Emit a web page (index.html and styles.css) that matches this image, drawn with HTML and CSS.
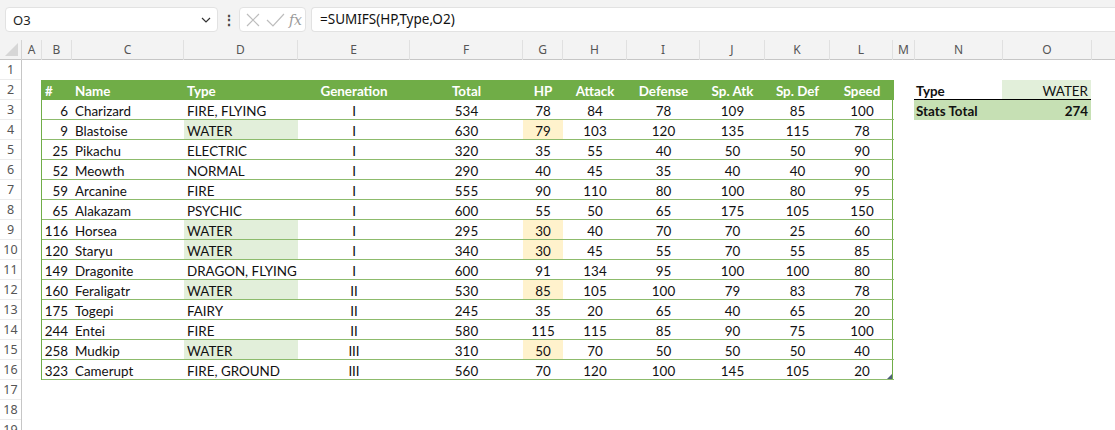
FILE: index.html
```html
<!DOCTYPE html>
<html>
<head>
<meta charset="utf-8">
<link rel="stylesheet" href="styles.css">
</head>
<body>
<div class="app">
  <div class="toolbar">
    <div class="namebox">
      <span class="ref">O3</span>
      <svg class="chev" width="10" height="6" viewBox="0 0 10 6"><path d="M1 1 L5 5 L9 1" fill="none" stroke="#333" stroke-width="1.2"/></svg>
    </div>
    <div class="dots">⋮</div>
    <div class="fxbox">
      <svg width="18" height="18" viewBox="0 0 18 18"><path d="M3 3 L15 15 M15 3 L3 15" stroke="#bdbdbd" stroke-width="1.2" fill="none"/></svg>
      <svg width="20" height="18" viewBox="0 0 20 18"><path d="M2 9 L8 15 L19 3" stroke="#bdbdbd" stroke-width="1.2" fill="none"/></svg>
      <span class="fx">fx</span>
    </div>
    <div class="formula">=SUMIFS(HP,Type,O2)</div>
  </div>

  <div class="colhdr">
    <div class="corner"><span class="tri"></span></div>
    <div class="ch">A</div><div class="ch">B</div><div class="ch">C</div><div class="ch">D</div>
    <div class="ch">E</div><div class="ch">F</div><div class="ch">G</div><div class="ch">H</div>
    <div class="ch">I</div><div class="ch">J</div><div class="ch">K</div><div class="ch">L</div>
    <div class="ch">M</div><div class="ch">N</div><div class="ch">O</div><div class="ch last"></div>
  </div>

  <div class="sheet">
    <div class="rowhdrs">
      <div class="rh">1</div><div class="rh">2</div><div class="rh">3</div><div class="rh">4</div>
      <div class="rh">5</div><div class="rh">6</div><div class="rh">7</div><div class="rh">8</div>
      <div class="rh">9</div><div class="rh">10</div><div class="rh">11</div><div class="rh">12</div>
      <div class="rh">13</div><div class="rh">14</div><div class="rh">15</div><div class="rh">16</div>
      <div class="rh">17</div><div class="rh">18</div><div class="rh">19</div>
    </div>
    <div class="cells">
      <div class="blankrow"></div>
      <div class="content">
        <div class="colA"></div>
        <div class="ptable">
          <div class="th l">#</div><div class="th l">Name</div><div class="th l">Type</div><div class="th">Generation</div><div class="th">Total</div><div class="th">HP</div><div class="th">Attack</div><div class="th">Defense</div><div class="th">Sp. Atk</div><div class="th">Sp. Def</div><div class="th">Speed</div>

          <div class="td r">6</div><div class="td l">Charizard</div><div class="td l">FIRE, FLYING</div><div class="td">I</div><div class="td">534</div><div class="td">78</div><div class="td">84</div><div class="td">78</div><div class="td">109</div><div class="td">85</div><div class="td">100</div>
          <div class="td r">9</div><div class="td l">Blastoise</div><div class="td l water">WATER</div><div class="td">I</div><div class="td">630</div><div class="td hp">79</div><div class="td">103</div><div class="td">120</div><div class="td">135</div><div class="td">115</div><div class="td">78</div>
          <div class="td r">25</div><div class="td l">Pikachu</div><div class="td l">ELECTRIC</div><div class="td">I</div><div class="td">320</div><div class="td">35</div><div class="td">55</div><div class="td">40</div><div class="td">50</div><div class="td">50</div><div class="td">90</div>
          <div class="td r">52</div><div class="td l">Meowth</div><div class="td l">NORMAL</div><div class="td">I</div><div class="td">290</div><div class="td">40</div><div class="td">45</div><div class="td">35</div><div class="td">40</div><div class="td">40</div><div class="td">90</div>
          <div class="td r">59</div><div class="td l">Arcanine</div><div class="td l">FIRE</div><div class="td">I</div><div class="td">555</div><div class="td">90</div><div class="td">110</div><div class="td">80</div><div class="td">100</div><div class="td">80</div><div class="td">95</div>
          <div class="td r">65</div><div class="td l">Alakazam</div><div class="td l">PSYCHIC</div><div class="td">I</div><div class="td">600</div><div class="td">55</div><div class="td">50</div><div class="td">65</div><div class="td">175</div><div class="td">105</div><div class="td">150</div>
          <div class="td r">116</div><div class="td l">Horsea</div><div class="td l water">WATER</div><div class="td">I</div><div class="td">295</div><div class="td hp">30</div><div class="td">40</div><div class="td">70</div><div class="td">70</div><div class="td">25</div><div class="td">60</div>
          <div class="td r">120</div><div class="td l">Staryu</div><div class="td l water">WATER</div><div class="td">I</div><div class="td">340</div><div class="td hp">30</div><div class="td">45</div><div class="td">55</div><div class="td">70</div><div class="td">55</div><div class="td">85</div>
          <div class="td r">149</div><div class="td l">Dragonite</div><div class="td l">DRAGON, FLYING</div><div class="td">I</div><div class="td">600</div><div class="td">91</div><div class="td">134</div><div class="td">95</div><div class="td">100</div><div class="td">100</div><div class="td">80</div>
          <div class="td r">160</div><div class="td l">Feraligatr</div><div class="td l water">WATER</div><div class="td">II</div><div class="td">530</div><div class="td hp">85</div><div class="td">105</div><div class="td">100</div><div class="td">79</div><div class="td">83</div><div class="td">78</div>
          <div class="td r">175</div><div class="td l">Togepi</div><div class="td l">FAIRY</div><div class="td">II</div><div class="td">245</div><div class="td">35</div><div class="td">20</div><div class="td">65</div><div class="td">40</div><div class="td">65</div><div class="td">20</div>
          <div class="td r">244</div><div class="td l">Entei</div><div class="td l">FIRE</div><div class="td">II</div><div class="td">580</div><div class="td">115</div><div class="td">115</div><div class="td">85</div><div class="td">90</div><div class="td">75</div><div class="td">100</div>
          <div class="td r">258</div><div class="td l">Mudkip</div><div class="td l water">WATER</div><div class="td">III</div><div class="td">310</div><div class="td hp">50</div><div class="td">70</div><div class="td">50</div><div class="td">50</div><div class="td">50</div><div class="td">40</div>
          <div class="td r">323</div><div class="td l">Camerupt</div><div class="td l">FIRE, GROUND</div><div class="td">III</div><div class="td">560</div><div class="td">70</div><div class="td">120</div><div class="td">100</div><div class="td">145</div><div class="td">105</div><div class="td">20</div>
          <span class="handle"></span>
        </div>
        <div class="colM"></div>
        <div class="stats">
          <div class="sc b">Type</div><div class="sc val r">WATER</div>
          <div class="sc b tot">Stats Total</div><div class="sc b tot r">274</div>
        </div>
      </div>
    </div>
  </div>
</div>
</body>
</html>
```

FILE: styles.css
```css
* { box-sizing: border-box; }
html, body { margin: 0; padding: 0; }
body { width: 1115px; height: 430px; overflow: hidden; background: #fff; }
.app { width: 1115px; height: 430px; overflow: hidden; }

.toolbar {
  height: 40px;
  background: #f3f3f3;
  display: flex;
  align-items: flex-start;
  padding: 7px 0 0 5px;
  font-family: "Noto Sans", "Open Sans", sans-serif;
}
.namebox {
  width: 213px; height: 25px;
  background: #fff;
  border: 1px solid #e2e2e2;
  border-radius: 4px;
  display: flex; align-items: center; justify-content: space-between;
  padding: 0 6px 0 7px;
  font-size: 13px; color: #222;
}
.chev { margin-top: 1px; }
.dots { width: 21px; text-align: center; font-size: 14px; color: #444; line-height: 25px; font-weight: bold; }
.fxbox {
  width: 67px; height: 25px;
  background: #fff;
  border: 1px solid #e2e2e2;
  border-radius: 4px;
  display: flex; align-items: center; gap: 3px;
  padding: 0 3px 0 4px;
}
.fx { font-family: "DejaVu Serif", "Liberation Serif", serif; font-style: italic; color: #9a9a9a; font-size: 14px; margin-left: 1px; }
.formula {
  margin-left: 5px;
  flex: 1;
  height: 25px;
  background: #fff;
  border: 1px solid #e2e2e2;
  border-right: none;
  border-radius: 4px 0 0 4px;
  padding: 0 8px;
  font-size: 13.5px; line-height: 23px; color: #111;
}

.colhdr {
  height: 20px;
  display: grid;
  grid-template-columns: 22px 20px 30px 112px 114px 112px 113px 40px 64px 73px 65px 65px 63px 22px 88px 89px 1fr;
  background: #f3f3f3;
  border-bottom: 1px solid #c6c6c6;
  font-family: "Noto Sans", "Open Sans", sans-serif;
  font-size: 12px; color: #555;
}
.corner { position: relative; border-right: 1px solid #d4d4d4; }
.tri {
  position: absolute; left: 5px; top: 3px;
  width: 0; height: 0;
  border-left: 13px solid transparent;
  border-bottom: 13px solid #d6d6d6;
}
.ch { text-align: center; line-height: 20px; border-right: 1px solid #e0e0e0; }
.ch.last { border-right: none; }

.sheet { display: flex; }
.rowhdrs { width: 22px; border-right: 1px solid #c6c6c6; background: #fff; }
.rh {
  height: 20px; line-height: 20px; text-align: center;
  font-family: "Noto Sans", "Open Sans", sans-serif;
  font-size: 12.5px; color: #555;
  border-bottom: 1px solid #ececec;
}
.cells { flex: 1; }
.blankrow { height: 20px; }
.content { display: flex; align-items: flex-start; font-family: Lato, "Liberation Sans", sans-serif; font-size: 13.4px; color: #111; }
.colA { width: 19px; }
.ptable {
  position: relative;
  width: 852px;
  display: grid;
  grid-template-columns: 30px 112px 114px 112px 113px 40px 64px 73px 65px 65px 64px;
  grid-auto-rows: 20px;
  border-left: 1px solid #70ad47;
  border-right: 1px solid #70ad47;
}
.th {
  background: #70ad47; color: #fff; font-weight: bold;
  text-align: center; line-height: 22px; white-space: nowrap;
}
.th.l { text-align: left; padding-left: 3px; }
.td {
  text-align: center; line-height: 22px; white-space: nowrap;
  border-bottom: 1px solid #8dbb6c;
}
.td.l { text-align: left; padding-left: 3px; }
.td.r { text-align: right; padding-right: 4px; }
.td.water { background: #e2efda; }
.td.hp { background: #fff2cc; }
.handle {
  position: absolute; right: 0; bottom: 1px;
  width: 0; height: 0;
  border-left: 5px solid transparent;
  border-bottom: 5px solid #50607a;
}
.colM { width: 21px; }
.stats {
  display: grid;
  grid-template-columns: 88px 89px;
  grid-auto-rows: 20px;
}
.sc { line-height: 22px; padding-left: 2px; overflow: visible; }
.sc.r { text-align: right; padding-right: 3px; }
.sc.b { font-weight: bold; }
.sc.val { background: #e2efda; }
.stats .sc:nth-child(1), .stats .sc:nth-child(2) { border-bottom: 1px solid #000; }
.sc.tot { background: #c6e0b4; }
```
